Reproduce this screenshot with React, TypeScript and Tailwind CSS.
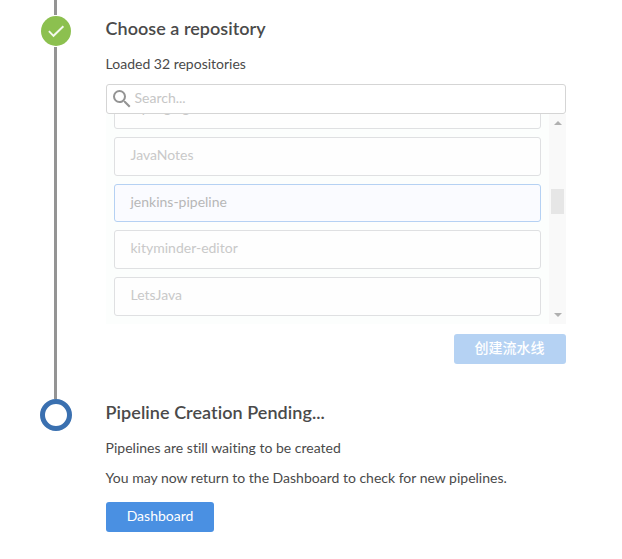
import React from "react";

function Rail() {
  return (
    <div className="flex w-8 flex-col">
      <div className="ml-[14px] h-[15px] w-[3px] bg-[#949494]" />
      <svg className="my-px ml-px block" width="30" height="30" viewBox="0 0 30 30">
        <circle cx="15" cy="15" r="15" fill="#8cc04f" />
        <path d="M7.9 15.2l4.6 4.6L22.4 10.2" fill="none" stroke="#f4f9ee" strokeWidth="1.9" />
      </svg>
      <div className="ml-[14px] h-[352px] w-[3px] bg-[#949494]" />
      <div className="h-8 w-8 rounded-full border-[5px] border-[#3a70b0]" />
    </div>
  );
}

function Repo({ name, selected = false }: { name: string; selected?: boolean }) {
  return (
    <div
      className={
        selected
          ? "flex h-[38px] shrink-0 items-center rounded-[3px] border border-[#b5d1f3] bg-[#fafbff] pb-0.5 pl-[15.5px] text-[#b7b7b7]"
          : "flex h-[39px] shrink-0 items-center rounded-[3px] border border-[#dfe0e2] bg-[#fefefe] pb-1 pl-[15.5px] text-[#c9c9c9]"
      }
    >
      {name}
    </div>
  );
}

export default function App() {
  return (
    <div className="flex h-[559px] w-[622px] overflow-hidden bg-white pl-10 font-['Lato','Noto_Sans_CJK_SC',sans-serif] text-[14px] leading-5 text-[#4a4a4a] [font-variant-ligatures:none]">
      <Rail />
      <main className="ml-[34px] w-[460px]">
        <h2 className="-ml-[0.4px] mt-[16px] text-[18px] font-semibold leading-6 tracking-[0.03px]">Choose a repository</h2>
        <p className="-ml-[0.4px] mt-[14px]">Loaded 32 repositories</p>
        <div className="mt-[10px] flex h-[30px] items-center rounded-[3px] border border-[#d5d5d5] bg-white pl-[3px] text-[#c6c6c6]">
          <svg width="24" height="24" viewBox="0 0 24 24" fill="#949494">
            <path d="M15.5 14h-.79l-.28-.27A6.471 6.471 0 0 0 16 9.5 6.5 6.5 0 1 0 9.5 16c1.61 0 3.09-.59 4.23-1.57l.27.28v.79l5 4.99L20.49 19l-4.99-5zm-6 0C7.01 14 5 11.99 5 9.5S7.01 5 9.5 5 14 7.01 14 9.5 11.99 14 9.5 14z" />
          </svg>
          <span className="pb-0.5 pl-[0.5px]">Search...</span>
        </div>
        <div className="flex h-[210px] overflow-hidden bg-[#fcfefd]">
          <div className="-mt-6 flex w-[443px] flex-col gap-2 px-2">
            <Repo name="inpeaging" />
            <Repo name="JavaNotes" />
            <Repo name="jenkins-pipeline" selected />
            <Repo name="kityminder-editor" />
            <Repo name="LetsJava" />
          </div>
          <div className="flex w-[17px] flex-col items-center bg-[#f9f9f9]">
            <svg className="mt-[7px] block" width="8" height="4" viewBox="0 0 8 4"><path d="M0 4L4 0l4 4z" fill="#b0b0b0" /></svg>
            <div className="mt-[64px] h-[25px] w-[13px] bg-[#e6e6e6]" />
            <svg className="mt-auto mb-[7px] block" width="8" height="4" viewBox="0 0 8 4"><path d="M0 0l4 4 4-4z" fill="#b0b0b0" /></svg>
          </div>
        </div>
        <div className="mt-[10px] flex justify-end">
          <button className="h-[30px] w-[112px] rounded-[3px] bg-[#b5d2f3] pb-0.5 pr-px font-medium text-white">创建流水线</button>
        </div>
        <h2 className="-ml-[0.4px] mt-[36px] text-[18px] font-semibold leading-6 tracking-[0.05px]">Pipeline Creation Pending...</h2>
        <p className="-ml-[0.4px] mt-[14px]">Pipelines are still waiting to be created</p>
        <p className="-ml-[0.4px] mt-[10px]">You may now return to the Dashboard to check for new pipelines.</p>
        <button className="mt-[14px] block h-[30px] w-[108px] rounded-[3px] bg-[#4a90e2] pb-0.5 text-white">Dashboard</button>
      </main>
    </div>
  );
}
